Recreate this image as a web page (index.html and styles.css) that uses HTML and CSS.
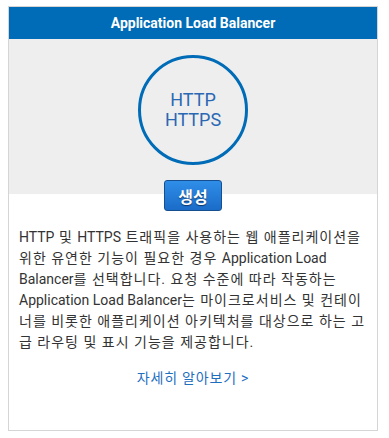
FILE: index.html
```html
<!DOCTYPE html>
<html lang="ko">
<head>
  <meta charset="UTF-8" />
  <meta name="viewport" content="width=device-width, initial-scale=1.0" />
  <title>Application Load Balancer</title>
  <link rel="stylesheet" href="styles.css">
</head>
<body>

<div class="card">
  <div class="card-title">Application Load Balancer</div>
  <div class="hero">
    <div class="circle">HTTP<br>HTTPS</div>
  </div>
  <div class="action">
    <button class="btn">생성</button>
  </div>
  <p class="desc"><span class="en">HTTP</span> 및 <span class="en">HTTPS</span> 트래픽을 사용하는 웹 애플리케이션을 위한 유연한 기능이 필요한 경우 <span class="en">Application Load Balancer</span>를 선택합니다. 요청 수준에 따라 작동하는 <span class="en">Application Load Balancer</span>는 마이크로서비스 및 컨테이너를 비롯한 애플리케이션 아키텍처를 대상으로 하는 고급 라우팅 및 표시 기능을 제공합니다.</p>
  <div class="more"><a href="#">자세히 알아보기 &gt;</a></div>
</div>

</body>
</html>
```

FILE: styles.css
```css
body {
  margin: 6px 0 0 8px;
  padding: 0;
  background-color: #fff;
  font-family: Roboto, "Noto Sans CJK KR", sans-serif;
  color: #333;
}
.card {
  width: 370px;
  height: 425px;
  border: 1px solid #d5d5d5;
  box-sizing: border-box;
}
.card-title {
  height: 32px;
  line-height: 32px;
  background-color: #006cb7;
  color: #fff;
  font-weight: bold;
  font-size: 14px;
  text-align: center;
}
.hero {
  background-color: #eee;
  padding: 16px 0 29px;
  display: flex;
  justify-content: center;
}
.circle {
  width: 110px;
  height: 110px;
  box-sizing: border-box;
  border: 3px solid #006cb7;
  border-radius: 50%;
  display: flex;
  align-items: center;
  justify-content: center;
  text-align: center;
  font-size: 18px;
  line-height: 20px;
  color: #2a68b4;
}
.action {
  display: flex;
  justify-content: center;
  margin-top: -14px;
}
.btn {
  width: 58px;
  height: 31px;
  padding: 0;
  border: 1px solid #164f8f;
  border-radius: 3px;
  background: linear-gradient(#2f8ee8, #1a6cc8);
  color: #fff;
  font-family: "Noto Sans CJK KR", sans-serif;
  font-weight: bold;
  font-size: 16px;
  text-shadow: 0 1px 1px #0d3466;
  cursor: pointer;
}
.desc {
  margin: 16px 0 0;
  padding: 0 6px 0 10px;
  font-size: 14px;
  line-height: 21px;
  letter-spacing: 1px;
}
.desc .en {
  letter-spacing: 0;
}
.more {
  text-align: center;
  margin-top: 14px;
  font-size: 14px;
  letter-spacing: 0.8px;
}
.more a {
  color: #1f6fbf;
  text-decoration: none;
}
```
